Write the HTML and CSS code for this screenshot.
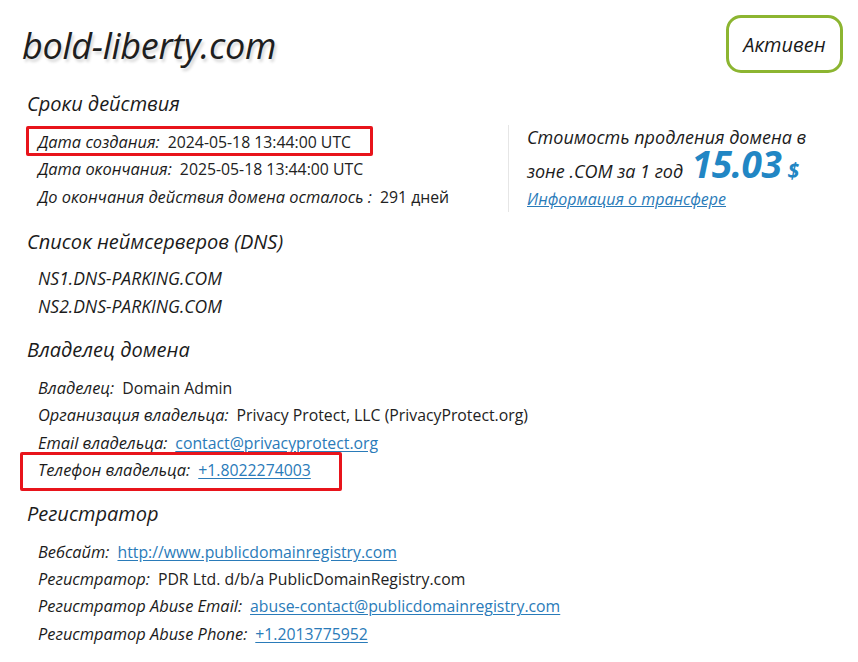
FILE: index.html
```html
<!DOCTYPE html>
<html lang="ru">
<head>
<meta charset="utf-8">
<link rel="stylesheet" href="styles.css">
</head>
<body>
<div class="page">
  <header class="top">
    <h1 class="domain">bold-liberty.com</h1>
    <div class="badge">Активен</div>
  </header>

  <section class="sec first">
    <h2 class="sec-title">Сроки действия</h2>
    <div class="split">
      <div class="rows dates">
        <div class="row mark mark-a"><span class="lbl">Дата создания:</span><span class="val">2024-05-18 13:44:00 UTC</span></div>
        <div class="row"><span class="lbl">Дата окончания:</span><span class="val">2025-05-18 13:44:00 UTC</span></div>
        <div class="row"><span class="lbl">До окончания действия домена осталось :</span><span class="val">291 дней</span></div>
      </div>
      <div class="price">
        <div class="price-line">Стоимость продления домена в</div>
        <div class="price-line second">зоне .COM за 1 год <span class="amount">15.03</span><span class="cur">$</span></div>
        <a class="transfer" href="#">Информация о трансфере</a>
      </div>
    </div>
  </section>

  <section class="sec">
    <h2 class="sec-title">Список неймсерверов (DNS)</h2>
    <div class="rows ns">
      <div class="row"><span class="lbl">NS1.DNS-PARKING.COM</span></div>
      <div class="row"><span class="lbl">NS2.DNS-PARKING.COM</span></div>
    </div>
  </section>

  <section class="sec">
    <h2 class="sec-title">Владелец домена</h2>
    <div class="rows">
      <div class="row"><span class="lbl">Владелец:</span><span class="val">Domain Admin</span></div>
      <div class="row"><span class="lbl">Организация владельца:</span><span class="val">Privacy Protect, LLC (PrivacyProtect.org)</span></div>
      <div class="row"><span class="lbl">Email владельца:</span><a class="val link" href="#">contact@privacyprotect.org</a></div>
      <div class="row mark mark-b"><span class="lbl">Телефон владельца:</span><a class="val link" href="#">+1.8022274003</a></div>
    </div>
  </section>

  <section class="sec">
    <h2 class="sec-title">Регистратор</h2>
    <div class="rows">
      <div class="row"><span class="lbl">Вебсайт:</span><a class="val link" href="#">http://www.publicdomainregistry.com</a></div>
      <div class="row"><span class="lbl">Регистратор:</span><span class="val">PDR Ltd. d/b/a PublicDomainRegistry.com</span></div>
      <div class="row"><span class="lbl">Регистратор Abuse Email:</span><a class="val link" href="#">abuse-contact@publicdomainregistry.com</a></div>
      <div class="row"><span class="lbl">Регистратор Abuse Phone:</span><a class="val link" href="#">+1.2013775952</a></div>
    </div>
  </section>
</div>
</body>
</html>
```

FILE: styles.css
```css
*, *::before, *::after { box-sizing: border-box; }

html, body {
  margin: 0;
  padding: 0;
  background: #ffffff;
}

body {
  font-family: "Open Sans", "Noto Sans", sans-serif;
  color: #1b1b1b;
}

.page {
  padding: 15px 15px 0 22px;
}

.top {
  display: flex;
  justify-content: space-between;
  align-items: flex-start;
  height: 74px;
}

.domain {
  margin: 9px 0 0 0;
  font-size: 36px;
  line-height: 44px;
  font-style: italic;
  font-weight: 500;
  color: #1e1e1e;
  letter-spacing: -0.3px;
  text-shadow: 2px 3px 3px rgba(0, 0, 0, 0.16);
}

.badge {
  width: 117px;
  height: 58px;
  border: 3px solid #8cb531;
  border-radius: 15px;
  display: flex;
  align-items: center;
  justify-content: center;
  font-style: italic;
  font-weight: 500;
  font-size: 20px;
  color: #1b1b1b;
}

.sec {
  padding-left: 5px;
  margin-top: 15px;
}

.sec.first {
  margin-top: 0;
}

.sec-title {
  margin: 0;
  font-size: 20px;
  line-height: 30px;
  font-style: italic;
  font-weight: 400;
  color: #1b1b1b;
}

.rows {
  padding-left: 11px;
  margin-top: 9px;
}

.rows.ns {
  margin-top: 7px;
}

.row {
  position: relative;
  height: 27.4px;
  line-height: 27.4px;
  font-size: 15.8px;
  white-space: nowrap;
}

.ns .row {
  height: 28px;
  line-height: 28px;
}

.lbl {
  font-style: italic;
  font-weight: 500;
  font-size: 16.4px;
  color: #1b1b1b;
}

.ns .lbl {
  font-size: 17.5px;
}

.val {
  margin-left: 8px;
  color: #222;
  font-size: 15.8px;
}

.link {
  color: #2a7bb9;
  text-decoration: underline;
  text-underline-offset: 2px;
}

.mark::before {
  content: "";
  position: absolute;
  border: 3px solid #e8141b;
  border-radius: 2px;
  pointer-events: none;
}

.mark-a::before {
  left: -12px;
  top: -2px;
  width: 347px;
  height: 30px;
}

.mark-b::before {
  left: -18px;
  top: -4px;
  width: 322px;
  height: 39px;
}

.split {
  display: flex;
  align-items: flex-start;
}

.dates {
  width: 481px;
  flex: none;
}

.price {
  margin-top: 6px;
  height: 87px;
  border-left: 1px solid #e6e6e6;
  padding-left: 18px;
}

.price-line {
  font-style: italic;
  font-weight: 500;
  font-size: 18px;
  line-height: 24px;
  color: #1b1b1b;
  white-space: nowrap;
}

.price-line.second {
  height: 43px;
  margin-top: -4px;
  line-height: 33px;
}

.amount {
  font-size: 37px;
  font-weight: 700;
  color: #2186c4;
  margin-left: 4px;
  letter-spacing: -0.5px;
  line-height: 1;
}

.cur {
  font-size: 21px;
  font-weight: 700;
  color: #2186c4;
  margin-left: 6px;
  line-height: 1;
}

.transfer {
  display: block;
  font-style: italic;
  font-weight: 500;
  font-size: 16px;
  line-height: 22px;
  color: #2a7bb9;
  text-decoration: underline;
}
```
